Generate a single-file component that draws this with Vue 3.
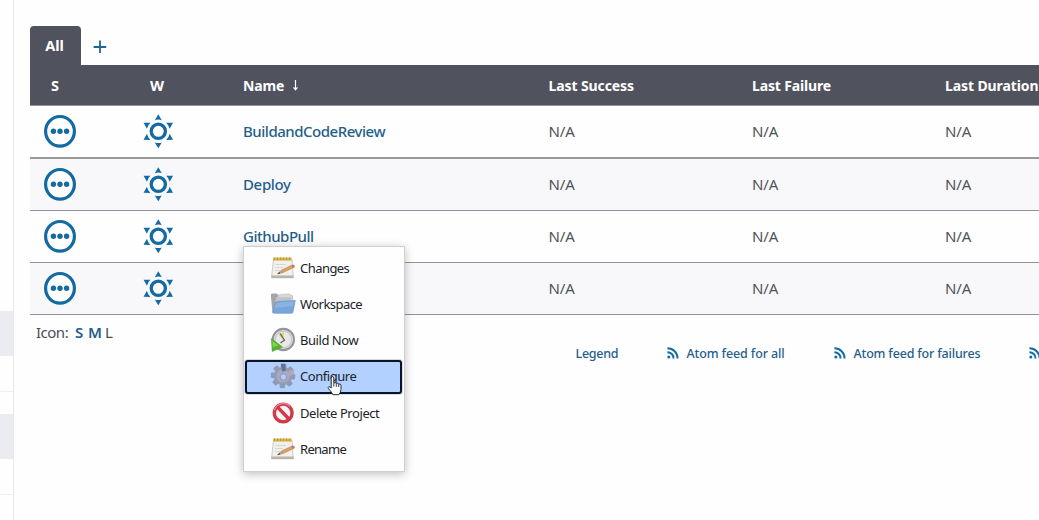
<script setup>
const jobs = [
  { name: 'BuildandCodeReview', cls: 'n-build' },
  { name: 'Deploy', cls: 'n-deploy' },
  { name: 'GithubPull', cls: 'n-github' },
  { name: '', cls: '' },
]
const angles = [0, 60, 120, 180, 240, 300]
const teeth = [0, 45, 90, 135, 180, 225, 270, 315]
const menu = [
  { label: 'Changes', icon: 'note', cls: 'm-changes' },
  { label: 'Workspace', icon: 'folder', cls: 'm-workspace' },
  { label: 'Build Now', icon: 'clock', cls: 'm-build' },
  { label: 'Configure', icon: 'gear', cls: 'm-configure' },
  { label: 'Delete Project', icon: 'ban', cls: 'm-delete' },
  { label: 'Rename', icon: 'note', cls: 'm-rename' },
]
const feeds = [
  { label: 'Atom feed for all', cls: 'f-all' },
  { label: 'Atom feed for failures', cls: 'f-fail' },
  { label: '', cls: 'f-latest' },
]
</script>

<template>
  <div class="page">
    <aside class="side">
      <div class="block first"></div>
      <div class="rule"></div>
      <div class="block second"></div>
      <div class="rule"></div>
    </aside>
    <main class="main">
      <nav class="tabs">
        <div class="tab"><span>All</span></div>
        <svg class="plus" width="14" height="14" viewBox="0 0 14 14"><path d="M7 0.6V13M0.6 7H13.2" stroke="#1c6794" stroke-width="1.8" /></svg>
      </nav>
      <div class="row head">
        <div class="s"><span>S</span></div>
        <div class="w"><span>W</span></div>
        <div>
          <span class="h-name">Name</span>
          <svg class="arrow" width="7" height="12" viewBox="0 0 7 12"><path d="M3.5 1V10M1.5 8.3L3.5 10.7L5.5 8.3" fill="none" stroke="#fff" stroke-width="1.2" /></svg>
        </div>
        <div><span class="h-success">Last Success</span></div>
        <div><span class="h-failure">Last Failure</span></div>
        <div><span class="h-duration">Last Duration</span></div>
      </div>
      <div v-for="(job, i) in jobs" :key="i" class="row job">
        <div class="s">
          <svg width="32" height="34" viewBox="0 0 32 34">
            <ellipse cx="16" cy="17.3" rx="14.4" ry="14.8" fill="#fff" stroke="#146aa2" stroke-width="3.2" />
            <circle v-for="x in [9.4, 16, 22.6]" :key="x" :cx="x" cy="17.3" r="2.7" fill="#146aa2" />
          </svg>
        </div>
        <div class="w">
          <svg width="32" height="34" viewBox="-16.3 -17.3 32 34">
            <circle r="7.1" fill="#fff" stroke="#146aa2" stroke-width="3.3" />
            <path v-for="a in angles" :key="a" d="M0 -17L3.5 -11.1Q0 -12.3 -3.5 -11.1Z" fill="#146aa2" :transform="`rotate(${a})`" />
          </svg>
        </div>
        <div><a :class="job.cls">{{ job.name }}</a></div>
        <div><span class="na">N/A</span></div>
        <div><span class="na">N/A</span></div>
        <div><span class="na">N/A</span></div>
      </div>
      <footer class="foot">
        <div class="sizes"><span class="lbl">Icon:</span><b class="sz-s">S</b><b class="sz-m">M</b><span>L</span></div>
        <div class="links">
          <a class="legend">Legend</a>
          <a v-for="f in feeds" :key="f.cls" class="feed" :class="f.cls">
            <svg width="12" height="12" viewBox="0 0 12 12">
              <circle cx="1.8" cy="10" r="1.5" fill="#146aa2" />
              <path d="M0.4 5.2A6 6 0 0 1 6.5 11.5M0.4 1.3A10 10 0 0 1 10.6 11.5" fill="none" stroke="#146aa2" stroke-width="1.9" />
            </svg>
            <span v-if="f.label">{{ f.label }}</span>
          </a>
        </div>
      </footer>
    </main>

    <div class="menu">
      <div v-for="m in menu" :key="m.label" class="item" :class="{ active: m.icon === 'gear' }">
        <svg v-if="m.icon === 'note'" width="26" height="26" viewBox="0 0 26 26">
          <path d="M3.5 4H22L23.3 22.5H1.5Z" fill="#f1f0ec" stroke="#c5c2bb" stroke-width=".8" />
          <path d="M1.4 20.5H23.6V23.2H1.4Z" fill="#b5b4af" />
          <path d="M3.2 2.6H21.5V5.6H3.2Z" fill="#d8b546" />
          <path d="M4.5 2.2V5M7.5 2.2V5M10.5 2.2V5M13.5 2.2V5M16.5 2.2V5M19.7 2.2V5" stroke="#b5953c" stroke-width=".8" />
          <path d="M5.5 9.5H16M5 12.5H13M5 15.5H10" stroke="#d1d2d5" stroke-width=".9" />
          <path d="M7.5 18.8L12 14.8L21.8 10.2L23.7 12.4L13 17.6Z" fill="#dda060" stroke="#a9764a" stroke-width=".5" />
          <path d="M21 10.5L23 9.5Q25.5 10.2 24.6 12L23.2 12.9Z" fill="#c87870" />
          <path d="M7.5 18.8L12 14.8L13 17.6Z" fill="#b99f7b" /><path d="M7.4 18.9L9.5 17L10.2 18.2Z" fill="#333" />
        </svg>
        <svg v-else-if="m.icon === 'folder'" width="26" height="26" viewBox="0 0 26 26">
          <path d="M.8 4Q.8 2.5 2.2 2.5H6.8L8.5 4.5H22.5V20L4.5 22L2.5 21.5Z" fill="#a5a6a5" />
          <path d="M8 4L18.5 2.8L22.5 5V13H7Z" fill="#d9dad8" stroke="#b5b5b5" stroke-width=".6" />
          <path d="M6 6.2H21V11H5Z" fill="#bfc3c5" />
          <path d="M5.5 11L11 10.3L25.3 9.5L23 21Q22.7 22.3 21.3 22.3H4Q2.5 22.3 2.7 20.8Z" fill="#78a6da" stroke="#6794c8" stroke-width=".6" />
          <path d="M6.2 12L12 11.3L24 10.5L22.8 15L4.3 17Z" fill="#9bc1e9" opacity=".5" />
        </svg>
        <svg v-else-if="m.icon === 'clock'" width="26" height="26" viewBox="0 0 26 26">
          <circle cx="13.4" cy="12.5" r="10.6" fill="#e8e9e7" stroke="#95939b" stroke-width="2.1" />
          <circle cx="13.4" cy="12.5" r="8.3" fill="none" stroke="#c6c6ca" stroke-width="1.2" />
          <path d="M13 13L8.5 7.5L14 5Z" fill="#d8d06c" />
          <path d="M10 6.5L14.5 13L10.5 16" fill="none" stroke="#65655f" stroke-width="1.3" />
          <path d="M1.4 11.6L12.4 20L2.2 24.4Z" fill="#55b62c" stroke="#4b9d30" stroke-width=".6" />
          <path d="M2.4 14L8 18.2L2.7 20Z" fill="#89d45d" />
        </svg>
        <svg v-else-if="m.icon === 'gear'" width="26" height="26" viewBox="-13 -13 26 26">
          <path v-for="a in teeth" :key="a" d="M-3.1 -8L-2.4 -12.2H2.4L3.1 -8Z" fill="#9299b3" :transform="`rotate(${a + 4})`" />
          <circle r="9" fill="#939bb6" />
          <circle r="6.6" fill="#a5abc4" />
          <circle cx=".4" cy="1" r="3.2" fill="#b2ccf7" stroke="#858ca8" stroke-width=".8" />
          <path d="M-2.3 -12.2H2.2L2.7 -5L-1 -4.5Z" fill="#66728f" />
          <path d="M5.5 -5L11 -6V-2L6.5 0Z" fill="#b9a9b8" />
        </svg>
        <svg v-else width="26" height="26" viewBox="0 0 26 26">
          <circle cx="13.2" cy="13" r="8.9" fill="#fcf5f5" stroke="#d3384a" stroke-width="3.4" />
          <path d="M7.2 6.8L19.2 19.2" stroke="#d3384a" stroke-width="3.4" />
          <path d="M4.3 10.2A9.5 9.5 0 0 1 20 6.2" fill="none" stroke="#e58a94" stroke-width="1.2" />
        </svg>
        <span :class="m.cls">{{ m.label }}</span>
      </div>
    </div>
    <svg class="cursor" width="16" height="20" viewBox="0 0 16 20">
      <path d="M4.2 12V2.2Q4.2 .7 5.5 .7Q6.8 .7 6.8 2.2V7Q8.4 5.9 9.3 7.4Q11 6.4 11.7 8Q14 7.4 14 9.7V13.5Q13.8 16.5 11.8 18.7H6Q4.7 16.3 1.6 12.7Q.6 11.3 1.8 10.7Q2.9 10.4 4.2 12Z" fill="#fff" stroke="#222b3c" stroke-width="1" />
      <path d="M6.8 7V10.5M9.3 7.5V10.8M11.7 8V11" stroke="#222b3c" stroke-width=".9" />
    </svg>
  </div>
</template>

<style>
body { margin: 0; overflow: hidden; }
</style>

<style scoped>
.page { position: relative; display: flex; width: 1039px; height: 520px; overflow: hidden; background: #fefefe; font-family: "Noto Sans", "Open Sans", sans-serif; white-space: nowrap; }
.side { box-sizing: border-box; flex: none; width: 14px; height: 520px; padding-top: 311px; border-right: 1px solid #e9e9ec; }
.block { height: 45px; background: #ebecf0; }
.rule { height: 1px; margin-top: 35px; background: #f0f0f3; }
.second { margin-top: 22px; }
.main { flex: none; width: 1025px; padding: 26px 0 0 16px; box-sizing: border-box; overflow: hidden; }
.tabs { display: flex; align-items: center; height: 39px; }
.tab { display: flex; align-items: center; justify-content: center; width: 51px; height: 39px; padding: 0 2px 1px 0; box-sizing: border-box; border-radius: 4px 4px 0 0; background: #50535e; color: #fff; font-size: 14.5px; font-weight: 700; }
.plus { margin: 2px 0 0 11.5px; }
.row { display: grid; grid-template-columns: 102px 111px 305.5px 203.5px 193px 110px; width: 1025px; box-sizing: border-box; align-items: center; border-bottom: 1px solid #92949a; }
.row > div { display: flex; align-items: center; }
.head { height: 41px; background: #50535e; color: #fff; font-size: 14px; font-weight: 700; }
.head .s { padding-left: 21px; }
.head .w { padding-left: 18px; }
.head .s, .head .w { font-size: 14.5px; }
.h-name { letter-spacing: -.15px; }
.h-success { letter-spacing: -.1px; }
.h-failure { letter-spacing: -.15px; }
.h-duration { letter-spacing: -.1px; }
.arrow { margin-left: 8px; }
.job { height: 52px; padding-bottom: 1px; font-size: 15px; color: #363a40; }
.job:nth-child(3) { height: 53px; border-bottom: 2px solid #9a9a9c; }
.job:nth-child(even) { background: #f8f8fb; }
.job .s { padding-left: 14px; }
.job .w { padding-left: 10px; }
.na { font-size: 15px; font-weight: 400; letter-spacing: -.1px; color: #50535a; }
a { color: #245e8b; font-weight: 500; }
.n-build { letter-spacing: -.48px; }
.n-deploy { letter-spacing: -.35px; }
.n-github { letter-spacing: -.48px; }
.foot { height: 60px; }
.sizes { display: flex; align-items: center; padding: 6px 0 0 6px; height: 22px; font-size: 15px; font-weight: 400; letter-spacing: -.5px; color: #4b4e54; }
.lbl { width: 39px; }
.sizes b { color: #245e8b; font-weight: 600; }
.sz-s { width: 13px; }
.sz-m { width: 17px; }
.links { display: flex; align-items: center; height: 20px; padding-left: 545.5px; font-size: 12.5px; }
.legend { flex: none; width: 91.5px; letter-spacing: -.25px; }
.feed { display: flex; flex: none; align-items: center; gap: 7.5px; }
.f-all { width: 167px; letter-spacing: -.12px; }
.f-fail { width: 195px; letter-spacing: -.17px; }
.menu { position: absolute; left: 243px; top: 246px; width: 162px; height: 226px; padding-top: 3px; box-sizing: border-box; border: 1px solid #cfcfd2; background: #fefefe; box-shadow: 0 2px 9px rgba(0,0,0,.25); font-size: 13px; color: #202229; }
.item { display: flex; align-items: center; gap: 4px; height: 36.2px; padding-left: 26px; box-sizing: border-box; }
.active { height: 34px; margin: 1px 2px 1.2px 1px; padding: 0 0 1px 23px; border: 2px solid #0b1324; border-radius: 3px; background: #b2d1ff; box-shadow: 0 0 0 1px #d4dce9; }
.m-changes { letter-spacing: -.55px; }
.m-workspace { letter-spacing: -.55px; }
.m-build { letter-spacing: -.45px; }
.m-configure { letter-spacing: -.45px; }
.m-delete { letter-spacing: -.43px; }
.m-rename { letter-spacing: -.7px; }
.cursor { position: absolute; left: 327px; top: 376px; }
</style>
